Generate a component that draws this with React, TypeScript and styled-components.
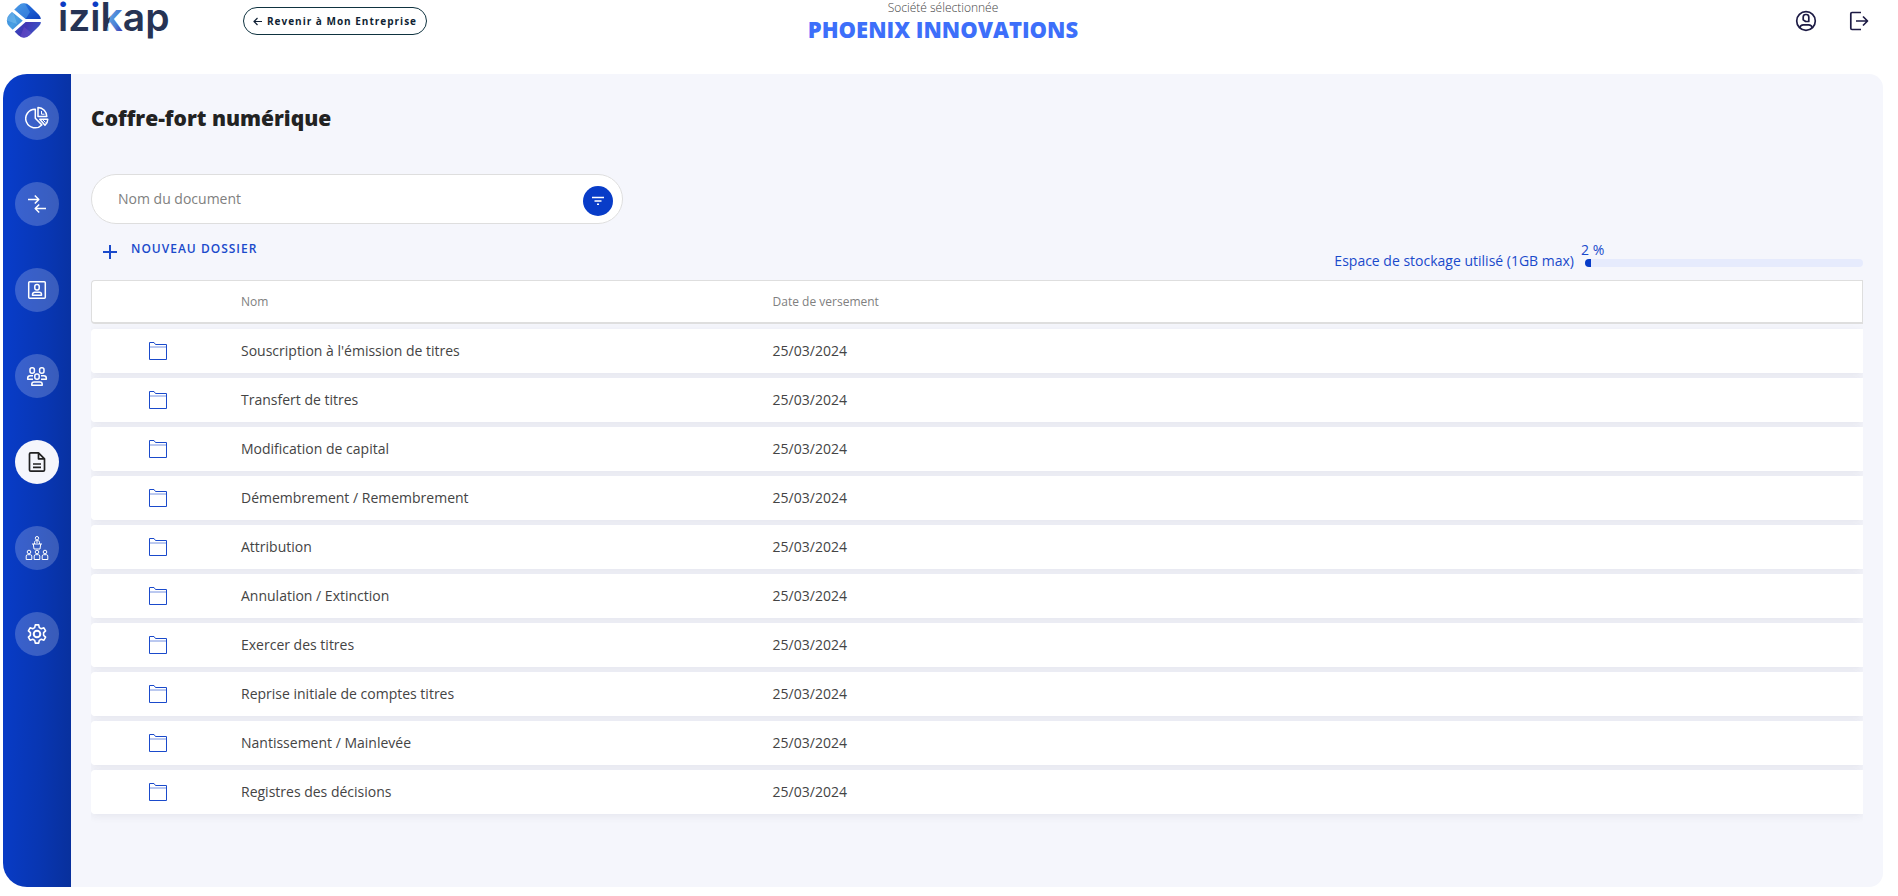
import React from "react";
import styled, { createGlobalStyle, css } from "styled-components";

const GlobalStyle = createGlobalStyle`
  *, *::before, *::after { box-sizing: border-box; }
  body {
    margin: 0;
    background: #fff;
    color: #222;
    font-family: "Open Sans", "Noto Sans", sans-serif;
    font-size: 14px;
    line-height: 20px;
  }
  button, input { font: inherit; }
`;

const Page = styled.div`
  display: flex;
  flex-direction: column;
  min-height: 100vh;
`;

const Header = styled.header`
  display: grid;
  grid-template-columns: 1fr auto 1fr;
  align-items: start;
  height: 74px;
  padding-right: 12px;
`;

const HeaderStart = styled.div`
  display: flex;
  align-items: flex-start;
  gap: 71px;
`;

const LogoLink = styled.a`
  display: block;
  width: 172px;
  height: 44px;
  svg { display: block; overflow: visible; }
`;

const BackButton = styled.button`
  display: flex;
  align-items: center;
  justify-content: center;
  gap: 5px;
  width: 184px;
  height: 28px;
  margin-top: 7px;
  padding: 0;
  border: 1px solid #0f3340;
  border-radius: 14px;
  background: #fff;
  color: #0f1f33;
  font-size: 10px;
  font-weight: 700;
  letter-spacing: 1px;
  white-space: nowrap;
  cursor: pointer;
`;

const Company = styled.div`
  text-align: center;
`;

const CompanyLabel = styled.div`
  color: #444;
  font-size: 12px;
  font-weight: 300;
  line-height: 16px;
`;

const CompanyName = styled.div`
  color: #3d6ffa;
  font-size: 22px;
  font-weight: 800;
  line-height: 26px;
`;

const HeaderActions = styled.div`
  display: flex;
  justify-content: flex-end;
  gap: 29px;
  padding: 9px 15px 0 0;
`;

const IconButton = styled.button`
  display: flex;
  padding: 0;
  border: 0;
  background: none;
  color: #1d1b45;
  cursor: pointer;
`;

const Shell = styled.div`
  display: flex;
  flex: 1;
  margin: 0 15px 9px 3px;
  border-radius: 24px 14px 14px 24px;
  background: #f5f6fc;
  overflow: hidden;
`;

const Sidebar = styled.nav`
  display: flex;
  flex-direction: column;
  align-items: center;
  gap: 42px;
  width: 68px;
  padding-top: 22px;
  background: linear-gradient(91deg, #083cc8 10%, #0836b2 60%, #08309c 100%);
`;

const NavItem = styled.a<{ $active?: boolean }>`
  display: flex;
  align-items: center;
  justify-content: center;
  width: 44px;
  height: 44px;
  border-radius: 50%;
  background: rgba(255, 255, 255, 0.2);
  color: #fff;
  ${({ $active }) =>
    $active &&
    css`
      background: #f5f6fc;
      color: #222;
    `}
`;

const Content = styled.main`
  flex: 1;
  min-width: 0;
  padding: 28px 20px 40px;
`;

const Title = styled.h1`
  margin: 0 0 40px;
  font-size: 21px;
  font-weight: 800;
  line-height: 32px;
`;

const Search = styled.form`
  display: flex;
  align-items: center;
  width: 30%;
  height: 50px;
  padding: 0 9px 0 26px;
  border: 1px solid #dedede;
  border-radius: 25px;
  background: #fff;
`;

const SearchInput = styled.input`
  flex: 1;
  min-width: 0;
  padding: 0;
  border: 0;
  outline: 0;
  background: none;
  color: #333;
  &::placeholder { color: #808080; opacity: 1; }
`;

const FilterButton = styled.button`
  display: flex;
  align-items: center;
  justify-content: center;
  width: 30px;
  height: 30px;
  margin-top: 4px;
  padding: 0;
  border: 0;
  border-radius: 50%;
  background: #083cc8;
  color: #fff;
  cursor: pointer;
`;

const Toolbar = styled.div`
  display: flex;
  justify-content: space-between;
  height: 51px;
`;

const NewFolderButton = styled.button`
  display: flex;
  align-items: flex-start;
  gap: 14px;
  padding: 16px 0 0 12px;
  border: 0;
  background: none;
  color: #1a4acb;
  font-size: 12px;
  font-weight: 600;
  line-height: 18px;
  letter-spacing: 1px;
  cursor: pointer;
  svg { margin-top: 5px; }
`;

const Storage = styled.div`
  display: flex;
  align-items: flex-end;
  gap: 7px;
  padding-bottom: 4px;
  color: #1a4acb;
`;

const Gauge = styled.div`
  width: 282px;
  margin-bottom: 4px;
  line-height: 18px;
`;

const Track = styled.div`
  height: 8px;
  margin-left: 4px;
  border-radius: 4px;
  background: #e6ebfd;
  overflow: hidden;
`;

const Fill = styled.div`
  height: 100%;
  background: #083cc8;
`;

const TableFrame = styled.div`
  padding-bottom: 10px;
  overflow: hidden;
`;

const Table = styled.table`
  width: 100%;
  table-layout: fixed;
  border-collapse: separate;
  border-spacing: 0 5px;
`;

const HeadCell = styled.th<{ $width?: string }>`
  width: ${({ $width }) => $width ?? "auto"};
  height: 44px;
  padding: 0;
  border: solid #dedede;
  border-width: 1px 0 2px;
  background: #fff;
  color: #808080;
  font-size: 12px;
  font-weight: 400;
  text-align: left;
  &:first-child { border-left-width: 1px; border-radius: 4px 0 0 4px; }
  &:last-child { border-right-width: 1px; }
`;

const Row = styled.tr`
  border-radius: 4px;
  box-shadow: 0 2px 8px rgba(40, 40, 60, 0.08);
`;

const Cell = styled.td`
  height: 44px;
  padding: 0;
  background: #fff;
  color: #444;
  &:first-child { padding-left: 57px; border-radius: 4px 0 0 4px; }
  svg { display: block; }
`;

const Logo = () => (
  <svg width="172" height="44" viewBox="0 0 172 44" role="img" aria-label="izikap">
    <defs>
      <linearGradient id="facetTop" x1="0" y1="0" x2="1" y2="1">
        <stop offset="0" stopColor="#4aa0e4" />
        <stop offset="0.45" stopColor="#2068d8" />
        <stop offset="1" stopColor="#0c3bb8" />
      </linearGradient>
      <linearGradient id="facetLeft" x1="0" y1="0" x2="1" y2="1">
        <stop offset="0" stopColor="#2b7bd8" />
        <stop offset="0.5" stopColor="#4a9fe2" />
        <stop offset="1" stopColor="#2d6fd0" />
      </linearGradient>
      <linearGradient id="facetBottom" x1="0" y1="0" x2="1" y2="0.3">
        <stop offset="0" stopColor="#2a55c4" />
        <stop offset="0.5" stopColor="#4336b4" />
        <stop offset="1" stopColor="#3a5ac8" />
      </linearGradient>
      <linearGradient id="letterI" gradientUnits="userSpaceOnUse" x1="0" y1="0" x2="0" y2="20">
        <stop offset="0.44" stopColor="#0c3bc4" />
        <stop offset="0.44" stopColor="#263354" />
      </linearGradient>
      <linearGradient id="letterK" gradientUnits="userSpaceOnUse" x1="109" y1="20" x2="124" y2="24">
        <stop offset="0" stopColor="#263354" />
        <stop offset="0.05" stopColor="#5a9ae0" />
        <stop offset="0.5" stopColor="#4a7fd4" />
        <stop offset="1" stopColor="#3a35b0" />
      </linearGradient>
      <clipPath id="gem">
        <rect x="9.5" y="6" width="29" height="29" rx="8" transform="rotate(45 24 20.5)" />
      </clipPath>
    </defs>
    <g clipPath="url(#gem)">
      <path d="M10 0H44V20H26L10 6Z" fill="url(#facetTop)" />
      <path d="M10 6 26 20 10 36H4V6Z" fill="url(#facetLeft)" />
      <path d="M10 36 26 20H44V42H10Z" fill="url(#facetBottom)" />
      <path d="M24 2 30 12 25 20 13 9Z" fill="#5fb0ea" opacity=".45" />
      <path d="M5 20 13 11 17 24Z" fill="#8ccaf2" opacity=".4" />
      <path d="M19 40 24 27 33 34Z" fill="#7a55d0" opacity=".4" />
    </g>
    <path d="M11 9 25 20.500 11 33M25 20.500H46" fill="none" stroke="#fff" strokeWidth="3" />
    <text x="58" y="31" fontFamily="Inter, sans-serif" fontSize="39" fontWeight="600" fill="#263354">
      <tspan fill="url(#letterI)">i</tspan>z<tspan fill="url(#letterI)">i</tspan>
      <tspan fill="url(#letterK)">k</tspan>ap
    </text>
  </svg>
);

const Stroke = ({
  size = 24,
  width = 1.5,
  box = 24,
  children,
}: {
  size?: number;
  width?: number;
  box?: number;
  children: React.ReactNode;
}) => (
  <svg
    width={size}
    height={size}
    viewBox={`0 0 ${box} ${box}`}
    fill="none"
    stroke="currentColor"
    strokeWidth={width}
    strokeLinejoin="round"
    aria-hidden="true"
  >
    {children}
  </svg>
);

const ArrowLeftIcon = () => (
  <Stroke size={9} box={9} width={1.2}>
    <path d="M9 4.5H1M4.5 1 1 4.5 4.5 8" />
  </Stroke>
);

const UserIcon = () => (
  <Stroke width={1.7}>
    <circle cx="12" cy="12" r="9.3" />
    <path d="M9.2 8a2.5 2.5 0 0 1 2.5-2.500h.6A2.500 2.500 0 0 1 14.800 8v4.500h-3.200L9.200 10.800ZM5.800 18.800c.4-2 1.800-3 3.600-3h5.200c1.800 0 3.200 1 3.600 3" />
  </Stroke>
);

const LogoutIcon = () => (
  <Stroke width={1.7}>
    <path d="M14 3.500H5a1.200 1.200 0 0 0-1.200 1.200v14.600A1.200 1.200 0 0 0 5 20.500h9M9 12h11.500M16 7.500 20.500 12 16 16.500" />
  </Stroke>
);

const PieIcon = () => (
  <Stroke>
    <path d="M10.300 3.200a9.300 9.300 0 1 0 6.500 15.700L10.300 12.300Z" />
    <path d="M13 1.500V10.500h8.800A9 9 0 0 0 13 1.500Z" />
    <path d="M14.800 13.200h8a8 8 0 0 1-2.800 6Z" />
    <path d="M16.500 5v3.200h3M18 14l2.500 2.500" strokeWidth="1" />
  </Stroke>
);

const ExchangeIcon = () => (
  <Stroke>
    <path d="M3 7.500h10.500M9.800 3.500l4 4-4 4M21 16.500H10.500M14.200 12.500l-4 4 4 4" />
  </Stroke>
);

const ContactIcon = () => (
  <Stroke>
    <rect x="3.700" y="3.700" width="16.600" height="16.600" rx="1" />
    <rect x="9.800" y="6.600" width="4.400" height="5.400" rx="2" />
    <path d="M7.500 17.200v-.7c0-1.300 1-2.200 2.300-2.200h4.400c1.300 0 2.300.9 2.300 2.200v.7Z" />
  </Stroke>
);

const GroupIcon = () => (
  <Stroke>
    <rect x="5" y="3.700" width="4.400" height="5.600" rx="2" />
    <rect x="14.600" y="3.700" width="4.400" height="5.600" rx="2" />
    <rect x="9.800" y="10" width="4.400" height="5.200" rx="2" />
    <path d="M8 11.800H5.200c-1.500 0-2.500.9-2.500 2.500v.9H8M16 11.800h2.800c1.500 0 2.500.9 2.500 2.500v.9H16M6.800 21.200v-1c0-1.300 1-2.200 2.300-2.200h5.800c1.300 0 2.300.9 2.300 2.200v1Z" />
  </Stroke>
);

const DocumentIcon = () => (
  <Stroke width={1.7}>
    <path d="M13.500 2.800H5.800a1.300 1.300 0 0 0-1.300 1.300v15.800a1.300 1.300 0 0 0 1.300 1.300h12.400a1.300 1.300 0 0 0 1.300-1.300V8.800ZM13.500 2.800v6h6M8 14h8M8 17.300h8" />
  </Stroke>
);

const AssemblyIcon = () => (
  <Stroke width={1}>
    <circle cx="12" cy="2.200" r="1.700" />
    <path d="M9.500 8V6.300c0-1 .8-1.700 1.700-1.700h1.600c.9 0 1.700.7 1.700 1.700V8M7 8h10M8.300 8l.7 5h6l.7-5M12 5v2" />
    {[4, 12, 20].map((x) => (
      <g key={x}>
        <circle cx={x} cy="16" r="1.800" />
        <path d={`M${x - 2.8} 23.500v-3.500c0-.8.600-1.300 1.400-1.300h2.800c.8 0 1.400.5 1.400 1.300v3.500Z`} />
      </g>
    ))}
  </Stroke>
);

const GearIcon = () => (
  <Stroke width={1.6}>
    <circle cx="12" cy="12" r="3.300" strokeWidth="2" />
    <path d="m10.300 2.900-.6 2.700-2 1.100-2.600-.9-1.700 3 2 1.900v2.600l-2 1.900 1.700 3 2.600-.9 2 1.100.6 2.700h3.400l.6-2.700 2-1.100 2.600.9 1.700-3-2-1.900v-2.600l2-1.900-1.700-3-2.600.9-2-1.100-.6-2.700Z" />
  </Stroke>
);

const FilterIcon = () => (
  <Stroke size={12} box={12} width={1.4}>
    <path d="M0 2.500h12M2.500 6h7M5 9.300h2" />
  </Stroke>
);

const PlusIcon = () => (
  <Stroke size={14} box={14} width={2}>
    <path d="M7 0v14M0 7h14" />
  </Stroke>
);

const FolderIcon = () => (
  <svg width="20" height="20" viewBox="0 0 20 20" fill="none" stroke="#1a4acb" aria-hidden="true">
    <path d="M1.500 18.500v-17H6l1.500 2h11v15Z" />
    <path d="M1.500 6h17" opacity=".6" />
  </svg>
);

const navigation = [
  { label: "Tableau de bord", icon: <PieIcon /> },
  { label: "Mouvements", icon: <ExchangeIcon /> },
  { label: "Contacts", icon: <ContactIcon /> },
  { label: "Actionnaires", icon: <GroupIcon /> },
  { label: "Coffre-fort numérique", icon: <DocumentIcon />, active: true },
  { label: "Assemblées", icon: <AssemblyIcon /> },
  { label: "Paramètres", icon: <GearIcon /> },
];

const folders = [
  "Souscription à l'émission de titres",
  "Transfert de titres",
  "Modification de capital",
  "Démembrement / Remembrement",
  "Attribution",
  "Annulation / Extinction",
  "Exercer des titres",
  "Reprise initiale de comptes titres",
  "Nantissement / Mainlevée",
  "Registres des décisions",
].map((name) => ({ name, date: "25/03/2024" }));

const usedPercent = 2;

export default function App() {
  return (
    <Page>
      <GlobalStyle />
      <Header>
        <HeaderStart>
          <LogoLink href="#" aria-label="izikap">
            <Logo />
          </LogoLink>
          <BackButton type="button">
            <ArrowLeftIcon />
            Revenir à Mon Entreprise
          </BackButton>
        </HeaderStart>
        <Company>
          <CompanyLabel>Société sélectionnée</CompanyLabel>
          <CompanyName>PHOENIX INNOVATIONS</CompanyName>
        </Company>
        <HeaderActions>
          <IconButton type="button" aria-label="Mon compte">
            <UserIcon />
          </IconButton>
          <IconButton type="button" aria-label="Se déconnecter">
            <LogoutIcon />
          </IconButton>
        </HeaderActions>
      </Header>
      <Shell>
        <Sidebar aria-label="Navigation principale">
          {navigation.map(({ label, icon, active }) => (
            <NavItem
              key={label}
              href="#"
              aria-label={label}
              aria-current={active ? "page" : undefined}
              $active={active}
            >
              {icon}
            </NavItem>
          ))}
        </Sidebar>
        <Content>
          <Title>Coffre-fort numérique</Title>
          <Search onSubmit={(event) => event.preventDefault()}>
            <SearchInput
              type="text"
              placeholder="Nom du document"
              aria-label="Nom du document"
            />
            <FilterButton type="button" aria-label="Filtrer">
              <FilterIcon />
            </FilterButton>
          </Search>
          <Toolbar>
            <NewFolderButton type="button">
              <PlusIcon />
              NOUVEAU DOSSIER
            </NewFolderButton>
            <Storage>
              <span id="storage-label">Espace de stockage utilisé (1GB max)</span>
              <Gauge>
                {usedPercent} %
                <Track
                  role="progressbar"
                  aria-labelledby="storage-label"
                  aria-valuenow={usedPercent}
                  aria-valuemin={0}
                  aria-valuemax={100}
                >
                  <Fill style={{ width: `${usedPercent}%` }} />
                </Track>
              </Gauge>
            </Storage>
          </Toolbar>
          <TableFrame>
            <Table>
              <thead>
                <tr>
                  <HeadCell $width="150px" aria-label="Type" />
                  <HeadCell $width="30%">Nom</HeadCell>
                  <HeadCell>Date de versement</HeadCell>
                </tr>
              </thead>
              <tbody>
                {folders.map(({ name, date }) => (
                  <Row key={name}>
                    <Cell>
                      <FolderIcon />
                    </Cell>
                    <Cell>{name}</Cell>
                    <Cell>{date}</Cell>
                  </Row>
                ))}
              </tbody>
            </Table>
          </TableFrame>
        </Content>
      </Shell>
    </Page>
  );
}
